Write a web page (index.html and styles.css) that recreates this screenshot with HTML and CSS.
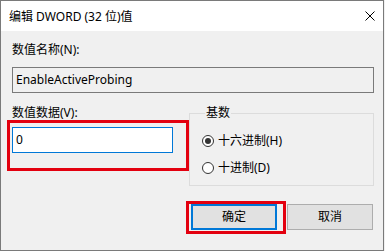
FILE: index.html
```html
<!DOCTYPE html>
<html lang="zh-CN">
<head>
<meta charset="utf-8">
<title>编辑 DWORD (32 位)值</title>
<link rel="stylesheet" href="styles.css">
</head>
<body>
<div class="window">
  <div class="titlebar">
    <span class="title">编辑 DWORD (32 位)值</span>
    <svg class="close" width="10" height="10" viewBox="0 0 10 10"><path d="M0.5 0.5 L9.5 9.5 M9.5 0.5 L0.5 9.5" stroke="#000" stroke-width="1" fill="none"/></svg>
  </div>
  <div class="content">
    <div class="label">数值名称(N):</div>
    <div class="field readonly">EnableActiveProbing</div>
    <div class="row">
      <div class="col">
        <div class="label">数值数据(V):</div>
        <div class="field edit">0</div>
      </div>
      <fieldset class="group">
        <legend>基数</legend>
        <div class="radio"><span class="dot on"></span><span>十六进制(H)</span></div>
        <div class="radio second"><span class="dot"></span><span>十进制(D)</span></div>
      </fieldset>
    </div>
    <div class="buttons">
      <div class="btn default">确定</div>
      <div class="btn">取消</div>
    </div>
  </div>
  <div class="mark mark-data"></div>
  <div class="mark mark-ok"></div>
</div>
</body>
</html>
```
FILE: styles.css
```css
html, body {
  margin: 0;
  padding: 0;
  background: #f0f0f0;
}
body {
  font-family: "Noto Sans", "Noto Sans CJK SC", sans-serif;
  font-size: 12px;
  color: #000;
}
.window {
  position: relative;
  width: 384px;
  height: 251px;
  box-sizing: border-box;
  border: 1px solid #7a7a7a;
  background: #f0f0f0;
  overflow: hidden;
}
.titlebar {
  height: 30px;
  background: #fff;
  display: flex;
  align-items: center;
  justify-content: space-between;
  padding: 0 8px 0 8px;
}
.title {
  font-size: 12px;
  line-height: 16px;
  margin-top: 2px;
}
.close {
  display: block;
  margin-top: 0px;
}
.content {
  padding: 11px 9px 0 11px;
}
.label {
  line-height: 16px;
  height: 16px;
  white-space: nowrap;
}
.field {
  box-sizing: border-box;
  height: 26px;
  line-height: 24px;
  padding-left: 3px;
  white-space: nowrap;
}
.readonly {
  margin-top: 9px;
  border: 1px solid #7a7a7a;
  background: #f0f0f0;
}
.edit {
  margin-top: 6px;
  border: 1px solid #0078d7;
  background: #fff;
}
.row {
  display: grid;
  grid-template-columns: 161px 185px;
  column-gap: 16px;
  margin-top: 12px;
}
.group {
  margin: 0;
  padding: 12px 0 9px 12px;
  border: 1px solid #dcdcdc;
  min-width: 0;
}
.group legend {
  padding: 0 1px;
  margin-left: 3px;
  line-height: 16px;
}
.radio {
  display: flex;
  align-items: center;
  height: 16px;
  line-height: 16px;
  gap: 4px;
  white-space: nowrap;
}
.radio.second {
  margin-top: 11px;
}
.dot {
  width: 12px;
  height: 12px;
  box-sizing: border-box;
  border: 1px solid #333;
  border-radius: 50%;
  background: #fff;
  display: flex;
  align-items: center;
  justify-content: center;
}
.dot.on::after {
  content: "";
  width: 6px;
  height: 6px;
  border-radius: 50%;
  background: #333;
}
.buttons {
  display: flex;
  justify-content: flex-end;
  gap: 10px;
  margin-top: 18px;
  padding-right: 1px;
}
.btn {
  box-sizing: border-box;
  width: 86px;
  height: 26px;
  background: #e1e1e1;
  border: 1px solid #adadad;
  display: flex;
  align-items: center;
  justify-content: center;
  line-height: 16px;
}
.btn.default {
  border: 2px solid #0078d7;
}
.mark {
  position: absolute;
  box-sizing: border-box;
  border: 3px solid #e3000f;
}
.mark-data {
  left: 6px;
  top: 119px;
  width: 182px;
  height: 51px;
}
.mark-ok {
  left: 185px;
  top: 200px;
  width: 100px;
  height: 33px;
}
```
